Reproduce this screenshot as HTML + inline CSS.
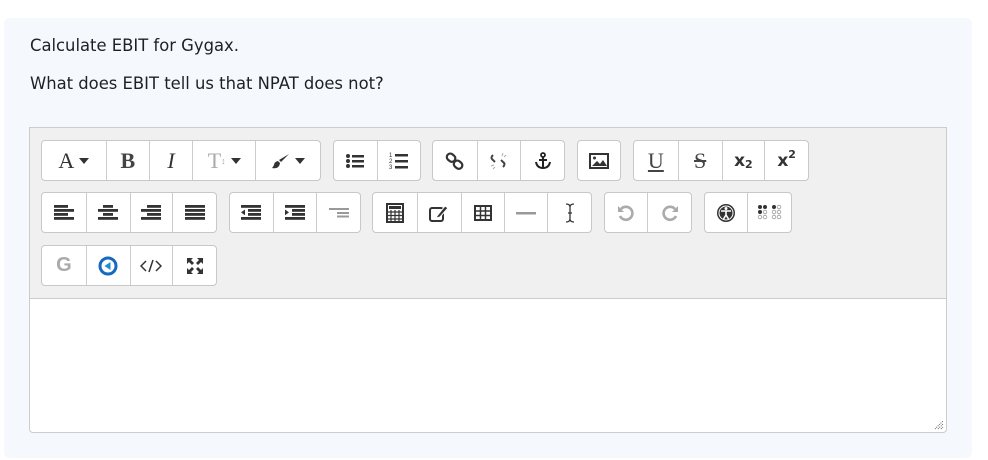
<!DOCTYPE html>
<html><head><meta charset="utf-8"><style>
*{box-sizing:border-box;margin:0;padding:0}
body{width:988px;height:460px;background:#fff;font-family:"Liberation Sans",sans-serif;position:relative;overflow:hidden}
.card{position:absolute;left:4px;top:18px;width:968px;height:440px;background:#f5f8fc;border-radius:6px}
.t{position:absolute;left:30px;color:#1d2125;font-family:"DejaVu Sans","Liberation Sans",sans-serif;font-size:16.4px}
.tb{position:absolute;left:29px;top:127px;width:918px;height:172px;background:#f0f0f0;border:1px solid #ccc;border-bottom:none}
.ed{position:absolute;left:29px;top:298px;width:918px;height:135px;background:#fff;border:1px solid #ccc;border-radius:0 0 4px 4px}
.g{position:absolute;height:41px;background:#fff;border:1px solid #c8c8c8;border-radius:4px;display:flex;overflow:hidden}
.b{height:100%;border-left:1px solid #ccc;display:flex;align-items:center;justify-content:center;color:#444;font-size:18px}
.b:first-child{border-left:none}
.s{font-family:"Liberation Serif",serif;font-weight:bold;font-size:22px}
.car{display:inline-block;width:0;height:0;border-left:5px solid transparent;border-right:5px solid transparent;border-top:6px solid #333;margin-left:5px}
svg{display:block}
</style></head><body>
<div class="card"></div>
<div class="t" style="top:36px">Calculate EBIT for Gygax.</div>
<div class="t" style="top:74px">What does EBIT tell us that NPAT does not?</div>
<div class="tb"></div>
<div class="ed"><svg style="position:absolute;right:2px;bottom:2px" width="10" height="10"><path d="M1 9L9 1M4 9L9 4M7 9L9 7" stroke="#666" stroke-width="1" stroke-dasharray="1 1"/></svg></div>

<!-- row 1 -->
<div class="g" style="left:41px;top:140px;width:280px">
 <div class="b s" style="width:64px;font-weight:normal;color:#333">A<span class="car"></span></div>
 <div class="b s" style="width:44px">B</div>
 <div class="b s" style="width:43px;font-style:italic;font-weight:normal;color:#333">I</div>
 <div class="b s" style="width:64px;font-weight:normal;color:#aaa">T<span style="font-size:9px">↕</span><span class="car"></span></div>
 <div class="b" style="width:65px"><svg width="18" height="16"><path d="M17 1L9 9L7 7Z" fill="#333"/><path d="M6 8Q2 9 2 12Q1 14 0 15Q5 16 7 13Q8 11 8 10Z" fill="#333"/></svg><span class="car"></span></div>
</div>
<div class="g" style="left:333px;top:140px;width:88px">
 <div class="b" style="width:44px"><svg width="20" height="16"><circle cx="3" cy="3" r="2" fill="#333"/><circle cx="3" cy="8" r="2" fill="#333"/><circle cx="3" cy="13" r="2" fill="#333"/><rect x="7" y="2" width="12" height="2.5" fill="#333"/><rect x="7" y="7" width="12" height="2.5" fill="#333"/><rect x="7" y="12" width="12" height="2.5" fill="#333"/></svg></div>
 <div class="b" style="width:44px"><svg width="20" height="18"><text x="0" y="5" font-size="6" fill="#333">1</text><text x="0" y="11" font-size="6" fill="#333">2</text><text x="0" y="17" font-size="6" fill="#333">3</text><rect x="6" y="2" width="13" height="2.5" fill="#333"/><rect x="6" y="8" width="13" height="2.5" fill="#333"/><rect x="6" y="14" width="13" height="2.5" fill="#333"/></svg></div>
</div>
<div class="g" style="left:432px;top:140px;width:133px">
 <div class="b" style="width:44px"><svg width="20" height="18"><rect x="2" y="2" width="9" height="7" rx="3.5" transform="rotate(40 6 5)" fill="none" stroke="#333" stroke-width="2.2"/><rect x="9" y="9" width="9" height="7" rx="3.5" transform="rotate(40 13 12)" fill="none" stroke="#333" stroke-width="2.2"/></svg></div>
 <div class="b" style="width:44px"><svg width="20" height="20"><path d="M4 4Q1 7 4 9L6 11M14 16Q17 13 14 11L12 9" fill="none" stroke="#444" stroke-width="2"/><path d="M14 2L13 5M17 4L15 6M2 15L5 14M4 18L6 16" stroke="#aaa" stroke-width="1"/></svg></div>
 <div class="b" style="width:44px"><svg width="18" height="18"><circle cx="9" cy="3" r="2" fill="none" stroke="#222" stroke-width="1.8"/><path d="M9 5V16M5 8H13M2 10Q3 16 9 16Q15 16 16 10" fill="none" stroke="#222" stroke-width="2"/></svg></div>
</div>
<div class="g" style="left:577px;top:140px;width:44px">
 <div class="b" style="width:44px"><svg width="20" height="16"><rect x="1" y="1" width="18" height="14" fill="none" stroke="#333" stroke-width="2"/><circle cx="5.5" cy="5" r="1.5" fill="#333"/><path d="M3 13L8 8L11 11L14 7L18 13Z" fill="#333"/></svg></div>
</div>
<div class="g" style="left:633px;top:140px;width:176px">
 <div class="b s" style="width:44px;text-decoration:underline;font-weight:normal">U</div>
 <div class="b s" style="width:44px;text-decoration:line-through;font-weight:normal">S</div>
 <div class="b" style="width:43px;font-weight:bold;font-size:17px;color:#333;font-family:'DejaVu Sans',sans-serif">x<span style="font-size:11px;position:relative;top:4px">2</span></div>
 <div class="b" style="width:44px;font-weight:bold;font-size:17px;color:#333;font-family:'DejaVu Sans',sans-serif">x<span style="font-size:11px;position:relative;top:-6px">2</span></div>
</div>

<!-- row 2 -->
<div class="g" style="left:41px;top:192px;width:176px">
 <div class="b" style="width:44px"><svg width="20" height="15"><rect x="0" y="0" width="14" height="2.8" fill="#333"/><rect x="0" y="4" width="20" height="2.8" fill="#333"/><rect x="0" y="8" width="14" height="2.8" fill="#333"/><rect x="0" y="12" width="20" height="2.8" fill="#333"/></svg></div>
 <div class="b" style="width:44px"><svg width="20" height="15"><rect x="5" y="0" width="10" height="2.8" fill="#333"/><rect x="0" y="4" width="20" height="2.8" fill="#333"/><rect x="5" y="8" width="10" height="2.8" fill="#333"/><rect x="0" y="12" width="20" height="2.8" fill="#333"/></svg></div>
 <div class="b" style="width:43px"><svg width="20" height="15"><rect x="6" y="0" width="14" height="2.8" fill="#333"/><rect x="0" y="4" width="20" height="2.8" fill="#333"/><rect x="6" y="8" width="14" height="2.8" fill="#333"/><rect x="0" y="12" width="20" height="2.8" fill="#333"/></svg></div>
 <div class="b" style="width:44px"><svg width="20" height="15"><rect x="0" y="0" width="20" height="2.8" fill="#333"/><rect x="0" y="4" width="20" height="2.8" fill="#333"/><rect x="0" y="8" width="20" height="2.8" fill="#333"/><rect x="0" y="12" width="20" height="2.8" fill="#333"/></svg></div>
</div>
<div class="g" style="left:229px;top:192px;width:132px">
 <div class="b" style="width:43px"><svg width="20" height="15"><rect x="0" y="0" width="20" height="2.8" fill="#333"/><rect x="7" y="4" width="13" height="2.8" fill="#333"/><rect x="7" y="8" width="13" height="2.8" fill="#333"/><rect x="0" y="12" width="20" height="2.8" fill="#333"/><path d="M0 7.4L4 4.5V10.3Z" fill="#333"/></svg></div>
 <div class="b" style="width:44px"><svg width="20" height="15"><rect x="0" y="0" width="20" height="2.8" fill="#333"/><rect x="7" y="4" width="13" height="2.8" fill="#333"/><rect x="7" y="8" width="13" height="2.8" fill="#333"/><rect x="0" y="12" width="20" height="2.8" fill="#333"/><path d="M4 7.4L0 4.5V10.3Z" fill="#333"/></svg></div>
 <div class="b" style="width:44px"><svg width="20" height="10"><rect x="0" y="0" width="20" height="2" fill="#999"/><rect x="8" y="4" width="12" height="2" fill="#999"/><rect x="8" y="7.5" width="12" height="2" fill="#999"/></svg></div>
</div>
<div class="g" style="left:372px;top:192px;width:220px">
 <div class="b" style="width:44px"><svg width="18" height="20"><rect x="1" y="1" width="16" height="18" fill="none" stroke="#333" stroke-width="2"/><rect x="3" y="3" width="12" height="3" fill="#333"/><path d="M1 9H17M1 12.5H17M1 16H17M5 7V19M9 7V19M13 7V19" stroke="#333" stroke-width="1.2"/></svg></div>
 <div class="b" style="width:44px"><svg width="20" height="18"><rect x="1" y="4" width="13" height="13" rx="2" fill="none" stroke="#333" stroke-width="2"/><path d="M8 12L16 2L19 4L11 13L7 14Z" fill="#333" stroke="#fff" stroke-width="1"/></svg></div>
 <div class="b" style="width:44px"><svg width="18" height="16"><rect x="1" y="1" width="16" height="14" fill="none" stroke="#333" stroke-width="2"/><path d="M1 6H17M1 10.5H17M6.5 1V15M11.5 1V15" stroke="#333" stroke-width="1.5"/></svg></div>
 <div class="b" style="width:43px"><svg width="20" height="6"><rect x="0" y="2" width="20" height="2.5" fill="#999"/></svg></div>
 <div class="b" style="width:44px"><svg width="12" height="20"><path d="M2 1Q6 1 6 4V16Q6 19 2 19M10 1Q6 1 6 4M6 16Q6 19 10 19M4 10H8" fill="none" stroke="#333" stroke-width="1.3"/></svg></div>
</div>
<div class="g" style="left:604px;top:192px;width:88px">
 <div class="b" style="width:43px"><svg width="18" height="18"><path d="M4 5A6.5 6.5 0 1 1 3 12" fill="none" stroke="#aaa" stroke-width="2.6"/><path d="M1 2V8H7Z" fill="#aaa"/></svg></div>
 <div class="b" style="width:45px"><svg width="18" height="18"><path d="M14 5A6.5 6.5 0 1 0 15 12" fill="none" stroke="#aaa" stroke-width="2.6"/><path d="M17 2V8H11Z" fill="#aaa"/></svg></div>
</div>
<div class="g" style="left:704px;top:192px;width:88px">
 <div class="b" style="width:43px"><svg width="20" height="20"><circle cx="10" cy="10" r="9" fill="#333"/><circle cx="10" cy="10" r="7" fill="none" stroke="#fff" stroke-width="1"/><circle cx="10" cy="5.5" r="1.5" fill="#fff"/><path d="M5 8H15M10 8V12M10 12L7.5 16M10 12L12.5 16" stroke="#fff" stroke-width="1.6"/></svg></div>
 <div class="b" style="width:45px"><svg width="26" height="18"><g fill="#333"><circle cx="3" cy="3" r="2"/><circle cx="8" cy="3" r="2"/><circle cx="3" cy="8" r="2"/><circle cx="17" cy="3" r="2"/></g><g fill="none" stroke="#999" stroke-width=".8"><circle cx="8" cy="8" r="1.8"/><circle cx="3" cy="13" r="1.8"/><circle cx="8" cy="13" r="1.8"/><circle cx="22" cy="3" r="1.8"/><circle cx="17" cy="8" r="1.8"/><circle cx="22" cy="8" r="1.8"/><circle cx="17" cy="13" r="1.8"/><circle cx="22" cy="13" r="1.8"/></g></svg></div>
</div>

<!-- row 3 -->
<div class="g" style="left:41px;top:245px;width:176px">
 <div class="b" style="width:44px;font-weight:bold;font-size:20px;color:#aaa">G</div>
 <div class="b" style="width:44px"><svg width="20" height="20"><circle cx="10" cy="10" r="8" fill="none" stroke="#1668c0" stroke-width="3"/><path d="M12.5 6V14L6.5 10Z" fill="#1a8fd8"/></svg></div>
 <div class="b" style="width:43px"><svg width="22" height="14"><path d="M6 2L1 7L6 12M16 2L21 7L16 12M13 1L9 13" fill="none" stroke="#333" stroke-width="1.5"/></svg></div>
 <div class="b" style="width:44px"><svg width="18" height="18"><path d="M1 1H7L5 3L8 6L6 8L3 5L1 7ZM17 1V7L15 5L12 8L10 6L13 3L11 1ZM1 17V11L3 13L6 10L8 12L5 15L7 17ZM17 17H11L13 15L10 12L12 10L15 13L17 11Z" fill="#333"/></svg></div>
</div>
</body></html>
